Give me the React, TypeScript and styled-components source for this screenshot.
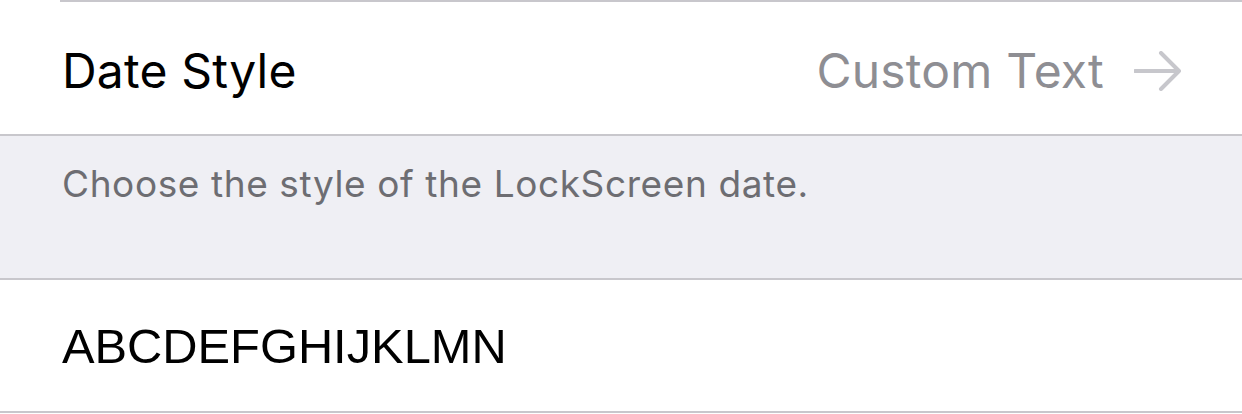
import React from 'react';
import styled, { createGlobalStyle } from 'styled-components';

const GlobalStyle = createGlobalStyle`
  html, body {
    margin: 0;
    padding: 0;
    background: #ffffff;
  }
  body {
    font-family: Inter, "Noto Sans", sans-serif;
    -webkit-font-smoothing: antialiased;
  }
`;

const Page = styled.div`
  width: 1242px;
  height: 414px;
  overflow: hidden;
  background: #ffffff;
`;

const Rule = styled.div<{ $inset?: number }>`
  height: 2px;
  margin-left: ${(p) => p.$inset || 0}px;
  background: #c8c7cc;
`;

const Cell = styled.div<{ $height: number; $shift?: number }>`
  display: flex;
  align-items: center;
  justify-content: space-between;
  box-sizing: border-box;
  height: ${(p) => p.$height}px;
  padding: ${(p) => p.$shift || 0}px 60px 0 62px;
  background: #ffffff;
`;

const Label = styled.span`
  font-size: 48px;
  color: #000000;
  letter-spacing: 0.2px;
`;

const Detail = styled.div`
  display: flex;
  align-items: center;
  gap: 30px;
`;

const Value = styled.span`
  font-size: 48px;
  color: #8e8e93;
  letter-spacing: 0.2px;
`;

const Footer = styled.div`
  height: 142px;
  box-sizing: border-box;
  padding: 25px 62px 0;
  background: #efeff4;
`;

const FooterText = styled.span`
  font-size: 37px;
  color: #6d6d72;
  letter-spacing: 0.6px;
`;

const PreviewText = styled.span`
  font-family: "Liberation Sans", Arial, sans-serif;
  font-size: 48.8px;
  color: #000000;
`;

const Arrow = () => (
  <svg width="48" height="40" viewBox="0 0 48 40" fill="none">
    <path
      d="M1 20 H45 M27 2 L45 20 L27 38"
      stroke="#c7c7cc"
      strokeWidth="4"
      strokeLinecap="round"
      strokeLinejoin="round"
    />
  </svg>
);

const App: React.FC = () => {
  return (
    <>
      <GlobalStyle />
      <Page>
        <Rule $inset={60} />
        <Cell $height={132} $shift={5}>
          <Label>Date Style</Label>
          <Detail>
            <Value>Custom Text</Value>
            <Arrow />
          </Detail>
        </Cell>
        <Rule />
        <Footer>
          <FooterText>Choose the style of the LockScreen date.</FooterText>
        </Footer>
        <Rule />
        <Cell $height={131}>
          <PreviewText>ABCDEFGHIJKLMN</PreviewText>
        </Cell>
        <Rule />
      </Page>
    </>
  );
};

export default App;
